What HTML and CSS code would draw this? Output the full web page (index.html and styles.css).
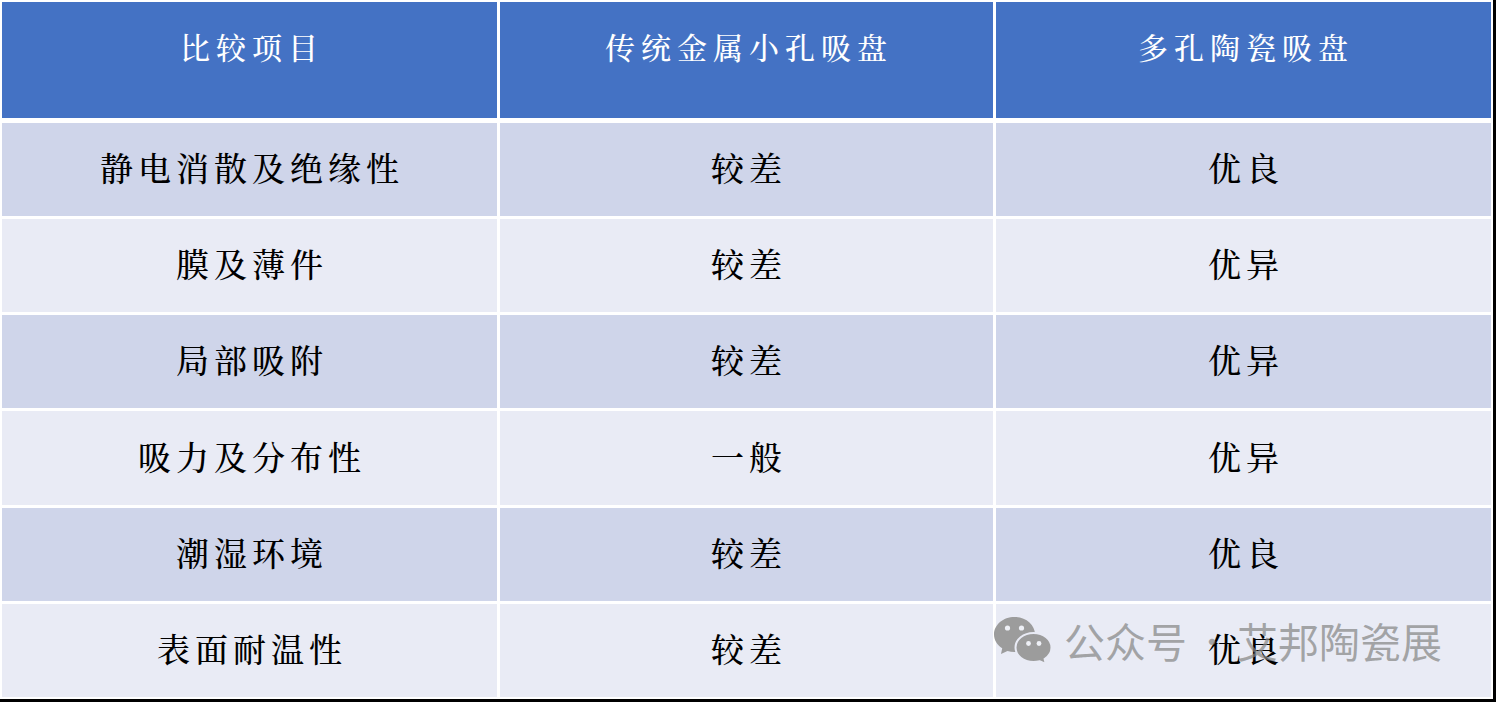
FILE: index.html
```html
<!DOCTYPE html>
<html lang="zh-CN">
<head>
<meta charset="utf-8">
<title>多孔陶瓷吸盘对比</title>
<link rel="stylesheet" href="styles.css">
</head>
<body>
<div class="page">
  <div class="table">
    <div class="cell head">比较项目</div>
    <div class="cell head">传统金属小孔吸盘</div>
    <div class="cell head">多孔陶瓷吸盘</div>

    <div class="cell odd">静电消散及绝缘性</div>
    <div class="cell odd">较差</div>
    <div class="cell odd">优良</div>

    <div class="cell even">膜及薄件</div>
    <div class="cell even">较差</div>
    <div class="cell even">优异</div>

    <div class="cell odd">局部吸附</div>
    <div class="cell odd">较差</div>
    <div class="cell odd">优异</div>

    <div class="cell even">吸力及分布性</div>
    <div class="cell even">一般</div>
    <div class="cell even">优异</div>

    <div class="cell odd">潮湿环境</div>
    <div class="cell odd">较差</div>
    <div class="cell odd">优良</div>

    <div class="cell even">表面耐温性</div>
    <div class="cell even">较差</div>
    <div class="cell even">优良</div>
  </div>
  <div class="watermark">
    <svg class="wx" viewBox="0 0 58 50" width="58" height="50" aria-hidden="true">
      <path d="M20.5 2 C31.8 2 41 9.8 41 19.5 C41 29.2 31.8 37 20.5 37 C18 37 15.7 36.6 13.5 35.9 L7 39 L8.2 33.2 C3.2 30 0 25 0 19.5 C0 9.8 9.2 2 20.5 2 Z" fill="#9c9c9c"/>
      <circle cx="13.5" cy="13" r="2.6" fill="#eef0f6"/>
      <circle cx="27.5" cy="13" r="2.6" fill="#eef0f6"/>
      <path d="M39.5 18 C49.6 18 57.5 24.6 57.5 32.5 C57.5 37.2 54.8 41.3 50.6 44 L51.8 49 L45.8 46.2 C43.8 46.7 41.7 47 39.5 47 C29.4 47 21.5 40.4 21.5 32.5 C21.5 24.6 29.4 18 39.5 18 Z" fill="#9c9c9c" stroke="#e9ebf5" stroke-width="2"/>
      <circle cx="34.5" cy="28.5" r="2.4" fill="#eef0f6"/>
      <circle cx="45" cy="28.5" r="2.4" fill="#eef0f6"/>
    </svg>
    <span class="wm-text wm-first">公众号</span>
    <span class="wm-dot">·</span>
    <span class="wm-text">艾邦陶瓷展</span>
  </div>
</div>
</body>
</html>
```

FILE: styles.css
```css
html, body {
  margin: 0;
  padding: 0;
  background: #000;
}

.page {
  position: relative;
  width: 1493px;
  height: 699px;
  box-sizing: border-box;
  padding: 2px;
  background: #ffffff;
  font-family: "Noto Serif CJK SC", "Noto Sans CJK SC", serif;
}

.table {
  display: grid;
  grid-template-columns: 495px 493px 495px;
  grid-template-rows: 118px repeat(6, 1fr);
  column-gap: 3px;
  row-gap: 3px;
  height: 100%;
}

.cell {
  display: flex;
  align-items: center;
  justify-content: center;
  font-size: 33px;
  font-weight: 500;
  letter-spacing: 5px;
  color: #000;
  padding-left: 5px;
  padding-bottom: 6px;
  box-sizing: border-box;
}

.head {
  background: #4472c4;
  color: #ffffff;
  font-size: 30px;
  letter-spacing: 6px;
  align-items: flex-start;
  padding-top: 22px;
  padding-bottom: 0;
  margin-bottom: 2px;
}

.odd {
  background: #cfd5ea;
}

.even {
  background: #e9ebf5;
}

.watermark {
  position: absolute;
  left: 994px;
  top: 615px;
  display: flex;
  align-items: center;
  font-family: "Noto Sans CJK SC", sans-serif;
  color: rgba(135, 135, 135, 0.72);
  font-size: 41px;
  line-height: 50px;
}

.wx {
  display: block;
  margin-right: 12px;
}

.wm-dot {
  font-size: 30px;
  width: 50px;
  text-align: center;
}
```
